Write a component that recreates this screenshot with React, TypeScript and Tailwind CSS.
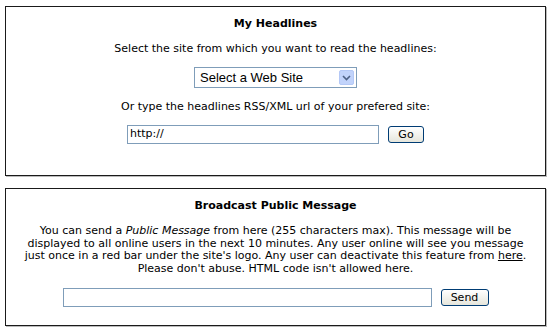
import React from "react";

export default function App() {
  const font = { fontFamily: '"DejaVu Sans", Verdana, sans-serif' };
  return (
    <div className="w-[550px] h-[331px] bg-white text-black" style={font}>
      <div className="pt-[6px] pl-[5px]">
        <div className="w-[541px] h-[170px] border border-[#1a1a1a] shadow-[1px_1px_0_#bbb] flex flex-col items-center">
          <div className="mt-[10px] text-[11px] font-bold leading-[14px]">My Headlines</div>
          <div className="mt-[11px] text-[11px] leading-[14px]">Select the site from which you want to read the headlines:</div>
          <div className="mt-[11px] w-[163px] h-[21px] border border-[#7f9db9] flex items-center justify-between pl-[5px] pr-[2px]">
            <span className="text-[13px] leading-none" style={{ fontFamily: '"Liberation Sans", Arial, sans-serif' }}>Select a Web Site</span>
            <span className="w-[15px] h-[15px] rounded-[2px] bg-[#c1d3fb] border border-[#b4c8f6] flex items-center justify-center">
              <svg width="9" height="6" viewBox="0 0 9 6"><path d="M1 1 L4.5 4.5 L8 1" stroke="#4d6185" strokeWidth="1.6" fill="none" /></svg>
            </span>
          </div>
          <div className="mt-[12px] text-[11px] leading-[14px]">Or type the headlines RSS/XML url of your prefered site:</div>
          <div className="mt-[11px] flex items-center">
            <div className="w-[252px] h-[19px] border border-[#7f9db9] flex items-center pl-[2px] text-[11px]">http://</div>
            <button className="ml-[9px] w-[36px] h-[17px] border border-[#003c74] rounded-[3px] bg-gradient-to-b from-white to-[#e6e6dc] text-[11px] leading-none flex items-center justify-center">Go</button>
          </div>
        </div>
      </div>
      <div className="pt-[12px] pl-[5px]">
        <div className="w-[541px] h-[138px] border border-[#1a1a1a] shadow-[1px_1px_0_#bbb] flex flex-col items-center">
          <div className="mt-[10px] text-[11px] font-bold leading-[14px]">Broadcast Public Message</div>
          <p className="mt-[12px] px-[14px] text-[11px] leading-[12.5px] text-center">
            You can send a <i>Public Message</i> from here (255 characters max). This message will be displayed to all online users in the next 10 minutes. Any user online will see you message just once in a red bar under the site's logo. Any user can deactivate this feature from <u>here</u>. Please don't abuse. HTML code isn't allowed here.
          </p>
          <div className="mt-[13px] flex items-center">
            <div className="w-[369px] h-[19px] border border-[#7f9db9]"></div>
            <button className="ml-[9px] w-[48px] h-[17px] border border-[#003c74] rounded-[3px] bg-gradient-to-b from-white to-[#e6e6dc] text-[11px] leading-none flex items-center justify-center">Send</button>
          </div>
        </div>
      </div>
    </div>
  );
}
